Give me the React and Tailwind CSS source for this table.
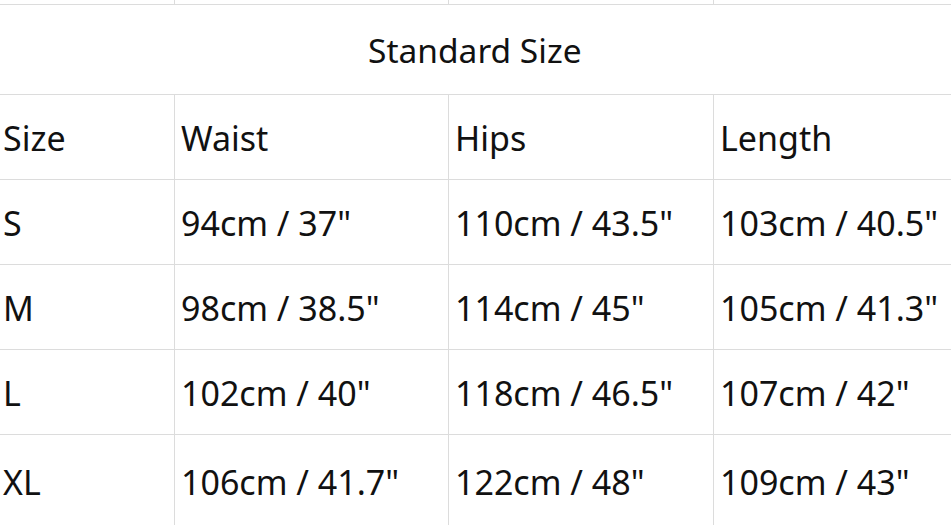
const rows = [
  ['Size', 'Waist', 'Hips', 'Length'],
  ['S', '94cm / 37"', '110cm / 43.5"', '103cm / 40.5"'],
  ['M', '98cm / 38.5"', '114cm / 45"', '105cm / 41.3"'],
  ['L', '102cm / 40"', '118cm / 46.5"', '107cm / 42"'],
  ['XL', '106cm / 41.7"', '122cm / 48"', '109cm / 43"'],
];

const cols = 'grid grid-cols-[175px_274px_265px_280px]';

export default function App() {
  return (
    <div className="w-[951px] h-[525px] overflow-hidden bg-white text-[#111] font-['Noto_Sans',sans-serif]">
      <div className="w-[994px]">
        {/* tail of the table above */}
        <div className={`${cols} h-[5px] border-b border-[#dcdcdc]`}>
          <div className="border-r border-[#dcdcdc]" />
          <div className="border-r border-[#dcdcdc]" />
          <div className="border-r border-[#dcdcdc]" />
          <div />
        </div>

        <div className="h-[90px] border-b border-[#dcdcdc] flex items-center pl-[368px] text-[33.5px] pt-[2px]">
          Standard Size
        </div>

        {rows.map((r, i) => (
          <div
            key={i}
            className={`${cols} ${i === rows.length - 1 ? 'h-[91px]' : 'h-[85px] border-b border-[#dcdcdc]'}`}
          >
            {r.map((c, j) => (
              <div
                key={j}
                className={`flex items-center text-[34px] pt-[3px] whitespace-nowrap ${j === 0 ? 'pl-[3px]' : 'pl-[6px]'} ${j < 3 ? 'border-r border-[#dcdcdc]' : ''}`}
              >
                {c}
              </div>
            ))}
          </div>
        ))}
      </div>
    </div>
  );
}
